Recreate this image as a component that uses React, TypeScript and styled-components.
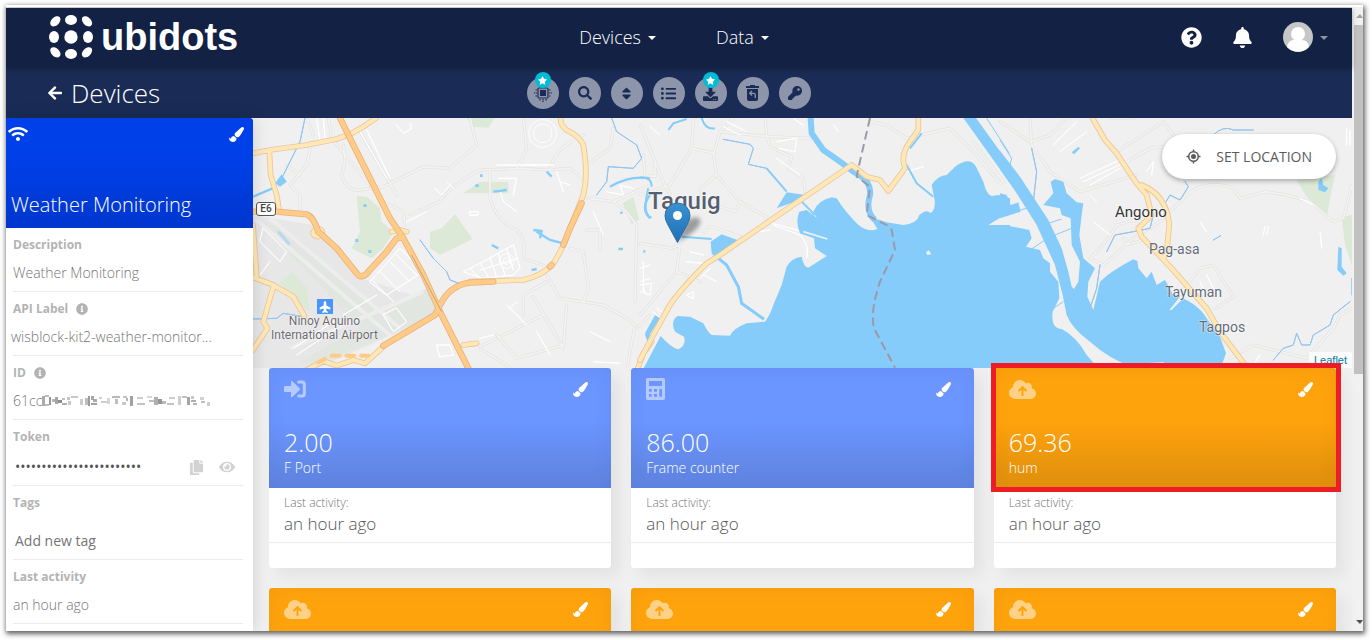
import React from "react";
import styled, { createGlobalStyle, css } from "styled-components";
import {
  FaWifi,
  FaPaintBrush,
  FaSearch,
  FaSort,
  FaListUl,
  FaDownload,
  FaKey,
  FaQuestionCircle,
  FaBell,
  FaInfoCircle,
  FaCopy,
  FaEye,
  FaArrowLeft,
  FaStar,
  FaPlane,
} from "react-icons/fa";
import { FaCloudArrowUp } from "react-icons/fa6";

const GlobalStyle = createGlobalStyle`
  *, *::before, *::after { box-sizing: border-box; }
  body {
    margin: 0;
    background: #fff;
    font-family: "Open Sans", sans-serif;
    font-size: 14px;
  }
  button { font: inherit; border: 0; padding: 0; cursor: pointer; }
  svg { display: block; }
`;

const Page = styled.div`
  height: 100vh;
  min-height: 400px;
  display: flex;
  padding: 5px 9px 9px 6px;
`;

const Frame = styled.div`
  flex: 1;
  min-width: 0;
  display: flex;
  border-top: 2px solid #fff;
  overflow: hidden;
  box-shadow: 1px 2px 5px 1px rgba(0, 0, 0, 0.62);
`;

const Screen = styled.div`
  flex: 1;
  min-width: 0;
  display: flex;
  flex-direction: column;
  border-top: 1px solid #dcdcdc;
`;

const ScrollTrack = styled.div`
  width: 11px;
  padding-left: 2px;
  background: #f1f1f1;
  display: flex;
  flex-direction: column;
  align-items: flex-end;
`;

const ScrollArrow = styled.div<{ $down?: boolean }>`
  width: 9px;
  height: 18px;
  display: flex;
  align-items: center;
  justify-content: flex-end;
  margin-top: ${(p) => (p.$down ? "auto" : "0")};
  color: ${(p) => (p.$down ? "#505050" : "#a3a3a3")};
`;

const ScrollThumb = styled.div`
  width: 9px;
  height: 56%;
  background: #c1c1c1;
`;

const TopBar = styled.header`
  flex: none;
  height: 60px;
  display: grid;
  grid-template-columns: 1fr auto 1fr;
  align-items: center;
  padding: 0 24px 2px 42px;
  background: #132244;
  box-shadow: 0 1px 5px rgba(0, 0, 0, 0.3);
  z-index: 2;
`;

const Logo = styled.a`
  display: flex;
  align-items: center;
  gap: 7px;
  color: #fff;
  font: bold 38px/44px "Liberation Sans", Arial, sans-serif;
  text-decoration: none;
`;

const MainNav = styled.nav`
  display: flex;
  gap: 60px;
  padding-right: 28px;
`;

const NavButton = styled.button`
  display: flex;
  align-items: center;
  gap: 7px;
  background: none;
  color: #fff;
  font-size: 18px;
  font-weight: 300;
  line-height: 24px;
`;

const Caret = styled.span<{ $dim?: boolean }>`
  border: 4px solid transparent;
  border-top-color: ${(p) => (p.$dim ? "#8b93a5" : "#fff")};
  border-bottom: 0;
  margin-top: 2px;
`;

const UserTools = styled.div`
  display: flex;
  justify-content: flex-end;
  align-items: center;
  gap: 30px;
`;

const IconButton = styled.button<{ $color?: string }>`
  display: flex;
  align-items: center;
  background: none;
  color: ${(p) => p.$color || "#fff"};
`;

const AvatarButton = styled(IconButton)`
  gap: 7px;
`;

const SubBar = styled.div`
  flex: none;
  height: 50px;
  display: grid;
  grid-template-columns: 1fr auto 1fr;
  align-items: center;
  padding: 0 62px 0 41px;
  background: #1a2c55;
`;

const BackLink = styled.a`
  display: flex;
  align-items: center;
  gap: 8px;
  color: #fff;
  font-size: 26px;
  font-weight: 300;
  line-height: 32px;
  text-decoration: none;
`;

const ToolRow = styled.div`
  display: flex;
  gap: 10px;
`;

const ToolButton = styled.button`
  position: relative;
  width: 32px;
  height: 32px;
  display: flex;
  align-items: center;
  justify-content: center;
  border-radius: 50%;
  background: #8c95a9;
  color: #1a2c55;
`;

const StarBadge = styled.span`
  position: absolute;
  top: -5px;
  left: 8px;
  width: 16px;
  height: 16px;
  display: flex;
  align-items: center;
  justify-content: center;
  border-radius: 50%;
  background: #00bcd6;
  color: #fff;
`;

const Columns = styled.div`
  flex: 1;
  min-height: 0;
  display: flex;
`;

const Sidebar = styled.aside`
  flex: none;
  width: 247px;
  background: #fff;
  overflow: hidden;
  box-shadow: 0 0 16px rgba(0, 0, 0, 0.14);
  z-index: 1;
`;

const DeviceHead = styled.div`
  height: 110px;
  display: flex;
  flex-direction: column;
  justify-content: space-between;
  padding: 6px 9px 9px 2px;
  background: linear-gradient(#0040e9 35%, #0036ce);
  border-top-right-radius: 3px;
  color: #fff;
`;

const DeviceHeadIcons = styled.div`
  display: flex;
  justify-content: space-between;
`;

const DeviceName = styled.h1`
  margin: 0 0 0 3px;
  font-size: 20px;
  font-weight: 300;
  line-height: 28px;
  color: #fff;
`;

const Field = styled.div<{ $height?: number }>`
  height: ${(p) => p.$height || 64}px;
  margin: 0 10px 0 7px;
  padding: 8px 0 7px;
  border-bottom: 1px solid #ececec;
  display: flex;
  flex-direction: column;
  justify-content: space-between;
`;

const FieldLabel = styled.label`
  display: flex;
  align-items: center;
  gap: 8px;
  color: #b3b3b3;
  font-size: 12px;
  font-weight: 700;
  line-height: 18px;
`;

const FieldValue = styled.div`
  display: flex;
  align-items: center;
  color: #757575;
  font-weight: 300;
  line-height: 22px;
`;

const FieldInput = styled.input<{ $strong?: boolean }>`
  flex: 1;
  min-width: 0;
  width: 100%;
  height: 22px;
  padding: 0 0 0 2px;
  border: 0;
  outline: 0;
  background: none;
  color: ${(p) => (p.$strong ? "#555" : "#757575")};
  font: ${(p) => (p.$strong ? 400 : 300)} 14px/22px "Open Sans", sans-serif;
  &::placeholder { color: #757575; opacity: 1; }
`;

const LabelInput = styled(FieldInput)`
  flex: none;
  padding: 0;
  margin-left: -2px;
`;

const TagInput = styled(FieldInput)`
  flex: none;
  font-weight: 400;
`;

const TokenActions = styled.div`
  display: flex;
  gap: 15px;
  padding-right: 8px;
`;

const Main = styled.main`
  flex: 1;
  min-width: 0;
  background: #f0f0f0;
`;

const MapPanel = styled.section`
  position: relative;
  height: 250px;
  overflow: hidden;
  background: #f0f0f0;
`;

const MapCanvas = styled.svg`
  width: 100%;
  height: 100%;
`;

const MapLabel = styled.span<{ $x: number; $y: number; $size?: number; $color?: string; $weight?: number }>`
  position: absolute;
  left: ${(p) => p.$x}px;
  top: ${(p) => p.$y}px;
  color: ${(p) => p.$color || "#626b7a"};
  font-family: Roboto, sans-serif;
  font-size: ${(p) => p.$size || 14}px;
  font-weight: ${(p) => p.$weight || 400};
  line-height: 1;
  text-align: center;
  white-space: nowrap;
  text-shadow: 0 0 2px #fff, 0 0 1px #fff;
`;

const AirportLabel = styled(MapLabel)`
  line-height: 14px;
`;

const RoadShield = styled.span`
  position: absolute;
  left: 3px;
  top: 84px;
  width: 20px;
  height: 14px;
  border: 1px solid #555;
  border-radius: 3px;
  background: #fff;
  color: #444;
  font: 500 10px/12px Roboto, sans-serif;
  text-align: center;
`;

const AirportMark = styled.span`
  position: absolute;
  left: 64px;
  top: 181px;
  width: 16px;
  height: 15px;
  display: flex;
  align-items: center;
  justify-content: center;
  background: #4a96f8;
  color: #fff;
  svg { transform: rotate(-90deg); }
`;

const Pin = styled.svg`
  position: absolute;
  left: 411px;
  top: 84px;
`;

const LocationButton = styled.button`
  position: absolute;
  top: 16px;
  right: 16px;
  height: 45px;
  display: flex;
  align-items: center;
  gap: 15px;
  padding: 0 24px;
  border-radius: 23px;
  background: #fff;
  color: #5c5c5c;
  font-size: 14px;
  box-shadow: 0 2px 5px rgba(0, 0, 0, 0.3);
`;

const Attribution = styled.a`
  position: absolute;
  right: 0;
  bottom: 0;
  padding: 0 5px;
  background: rgba(255, 255, 255, 0.7);
  color: #0078a8;
  font: 11px/16px "Liberation Sans", Arial, sans-serif;
  text-decoration: none;
`;

const CardGrid = styled.div`
  display: grid;
  grid-template-columns: repeat(3, 1fr);
  gap: 20px;
  padding: 0 16px;
`;

const CardBox = styled.article<{ $marked?: boolean }>`
  position: relative;
  height: 200px;
  border-radius: 3px;
  background: #fff;
  box-shadow: 8px 8px 16px rgba(0, 0, 0, 0.06);
  ${(p) =>
    p.$marked &&
    css`
      &::after {
        content: "";
        position: absolute;
        inset: -5px -5px 76px -3px;
        border: 5px solid #ee1c25;
      }
    `}
`;

const CardHead = styled.div<{ $tone: "blue" | "orange" }>`
  height: 120px;
  padding: 10px 23px 10px 15px;
  display: flex;
  flex-direction: column;
  justify-content: space-between;
  border-radius: 3px 3px 0 0;
  color: #fff;
  background: ${(p) =>
    p.$tone === "blue"
      ? "linear-gradient(#6b95ff 45%, #6187e6 85%, #6085e4)"
      : "linear-gradient(#ffa30d 45%, #e6930d 85%, #e4920d)"};
  box-shadow: inset 0 0 20px rgba(0, 0, 0, 0.05);
`;

const CardIcons = styled.div`
  display: flex;
  justify-content: space-between;
  align-items: center;
  height: 22px;
`;

const TypeIcon = styled.span`
  opacity: 0.5;
`;

const CardValue = styled.div`
  font-size: 25px;
  font-weight: 300;
  line-height: 30px;
`;

const CardName = styled.div`
  font-size: 14px;
  font-weight: 300;
  line-height: 20px;
  padding-top: 1px;
`;

const CardBody = styled.div`
  height: 55px;
  padding: 5px 15px 0;
  border-bottom: 1px solid #ececec;
  font-weight: 300;
`;

const ActivityLabel = styled.div`
  color: #757575;
  font-size: 12px;
  line-height: 20px;
`;

const ActivityValue = styled.div`
  color: #555;
  font-size: 17px;
  line-height: 22px;
`;

function LogoMark() {
  return (
    <svg width="46" height="44" viewBox="0 0 138 132" fill="#fff">
      <ellipse cx="69" cy="15" rx="18" ry="15" />
      <ellipse cx="69" cy="66" rx="20" ry="20" />
      <ellipse cx="69" cy="117" rx="18" ry="15" />
      <ellipse cx="18" cy="66" rx="15" ry="18" />
      <ellipse cx="120" cy="66" rx="15" ry="18" />
      <ellipse cx="22" cy="19" rx="18" ry="12" transform="rotate(-45 22 19)" />
      <ellipse cx="117" cy="19" rx="18" ry="12" transform="rotate(45 117 19)" />
      <ellipse cx="22" cy="112" rx="18" ry="12" transform="rotate(45 22 112)" />
      <ellipse cx="117" cy="112" rx="18" ry="12" transform="rotate(-45 117 112)" />
    </svg>
  );
}

function Avatar() {
  return (
    <svg width="30" height="30" viewBox="0 0 30 30">
      <circle cx="15" cy="15" r="15" fill="#c6c6c6" />
      <circle cx="15" cy="12" r="7" fill="#fff" />
      <path d="M4 25Q5 18 11 18h8q6 0 7 7A15 15 0 0 1 4 25z" fill="#fff" />
    </svg>
  );
}

function ChipIcon() {
  return (
    <svg width="18" height="18" viewBox="0 0 18 18" fill="none" stroke="currentColor">
      <rect x="4" y="4" width="10" height="10" rx="1" strokeWidth="1.2" />
      <rect x="6" y="6" width="6" height="6" fill="currentColor" stroke="none" />
      <path strokeWidth="1.2" strokeDasharray="1.500 .5" d="M6 3V1M9 3V0M12 3V1M6 15v2M9 15v3M12 15v2M3 6H1M3 9H0M3 12H1M15 6h2M15 9h3M15 12h2" />
    </svg>
  );
}

function TrashIcon() {
  return (
    <svg width="13" height="16" viewBox="0 0 13 16">
      <path fill="currentColor" d="M4 0h5v1h4v2H0V1h4zM1 4h11v10q0 2-2 2H3q-2 0-2-2z" />
      <path fill="none" stroke="#8c95a9" strokeWidth="1.3" d="M6 6 3.700 8.300 6 10.600M4 8.300h3.500q1.800 0 1.800 1.800V13" />
    </svg>
  );
}

function TargetIcon() {
  return (
    <svg width="15" height="15" viewBox="0 0 30 30" fill="none" stroke="currentColor">
      <circle cx="15" cy="15" r="9.500" strokeWidth="3" />
      <circle cx="15" cy="15" r="5" fill="currentColor" stroke="none" />
      <path strokeWidth="3" d="M15 1v5M15 24v5M1 15h5M24 15h5" />
    </svg>
  );
}

function EnterIcon() {
  return (
    <svg width="22" height="18" viewBox="0 0 66 54">
      <path fill="currentColor" d="M3 18h18V6q0-5 4-2l22 21q3 2 0 5L25 51q-4 3-4-2V36H3q-3 0-3-3V21q0-3 3-3z" />
      <path fill="none" stroke="currentColor" strokeWidth="9" strokeLinecap="round" d="M44 6h10q7 0 7 7v28q0 7-7 7H44" />
    </svg>
  );
}

function CalculatorIcon() {
  return (
    <svg width="19" height="22" viewBox="0 0 57 66">
      <path
        fill="currentColor"
        fillRule="evenodd"
        d="M5 0h47q5 0 5 5v56q0 5-5 5H5q-5 0-5-5V5q0-5 5-5zM9 9v15h39V9zM9 33v8h8v-8zM24 33v8h9v-8zM9 48v8h8v-8zM24 48v8h9v-8zM40 33v23h8V33z"
      />
    </svg>
  );
}

/* Hidden characters of the identifier: [x, y, width, height, grey level] */
const mosaic = [
  [0, 1, 3, 10, 170], [3, 0, 4, 2, 190], [3, 9, 4, 2, 190], [7, 2, 2, 8, 150], [10, 4, 3, 3, 180],
  [13, 2, 3, 7, 165], [16, 5, 4, 3, 140], [20, 3, 3, 2, 190], [20, 8, 5, 2, 175], [25, 2, 3, 3, 195],
  [26, 6, 3, 4, 200], [29, 1, 7, 2, 200], [38, 4, 3, 6, 205], [43, 3, 3, 7, 190], [46, 1, 2, 10, 155],
  [49, 1, 3, 4, 165], [51, 4, 4, 3, 170], [49, 8, 6, 2, 160], [57, 2, 3, 2, 210], [59, 6, 6, 2, 205],
  [65, 3, 3, 6, 215], [70, 1, 8, 2, 185], [73, 4, 3, 5, 190], [81, 1, 4, 2, 195], [84, 3, 2, 3, 180],
  [80, 7, 4, 3, 200], [88, 1, 3, 10, 160], [95, 2, 6, 2, 205], [95, 8, 8, 2, 195], [105, 1, 5, 2, 215],
  [107, 5, 5, 2, 190], [112, 2, 4, 8, 175], [116, 4, 4, 5, 150], [120, 6, 4, 3, 185], [127, 2, 6, 2, 205],
  [125, 8, 7, 2, 195], [136, 1, 3, 9, 205], [140, 1, 5, 2, 195], [145, 2, 3, 8, 165], [149, 1, 3, 3, 200],
  [149, 5, 5, 2, 175], [151, 8, 4, 2, 180], [158, 2, 4, 3, 210], [159, 6, 4, 2, 190], [165, 7, 3, 4, 205],
];

function Mosaic() {
  return (
    <svg width="168" height="12" viewBox="0 0 168 12">
      {mosaic.map(([x, y, w, h, g], i) => (
        <rect key={i} x={x} y={y} width={w} height={h} fill={`rgb(${g},${g},${g})`} />
      ))}
    </svg>
  );
}

const WATER = "#85ccfa";

function Roads({ d, kind }: { d: string; kind: "trunk" | "primary" | "minor" | "lane" | "stream" }) {
  const style = {
    trunk: ["#e9b27d", 19, "#ffcb86", 14],
    primary: ["#eac49c", 17, "#ffe8b6", 12],
    minor: ["#e3e2df", 9, "#f3f3f2", 5],
    lane: ["#ffffff", 3, "#ffffff", 3],
    stream: ["#93c5f2", 3, "#93c5f2", 3],
  }[kind] as [string, number, string, number];
  return (
    <g fill="none" strokeLinejoin="round" strokeLinecap="round">
      <path d={d} stroke={style[0]} strokeWidth={style[1]} />
      <path d={d} stroke={style[2]} strokeWidth={style[3]} />
    </g>
  );
}

function WestTile() {
  return (
    <g transform="translate(-9 -9)">
      <path fill="#e7e7e7" d="M9 300 190 330 330 490 430 520 540 560 560 600 190 765H9z" />
      <path fill="#e1e6e0" d="M20 310 110 345 400 600 545 510 565 595 200 750 150 740 330 640z" />
      <path fill="none" stroke="#ededed" strokeWidth="12" d="M20 315 430 670M60 310 450 640M120 700 520 530" />
      <g fill="#dde9d7">
        <path d="M320 242 350 245 390 280 395 320 430 350 400 400 365 430 305 400 330 350z" />
        <path d="M615 298 668 372 570 420 540 400 540 350 575 340z" />
        <path d="M640 235 690 200 775 200 775 235zM650 9H735L715 38 670 35zM1118 265 1150 245 1168 315 1145 328z" />
        <path d="M88 500 130 470 170 520 180 590 150 570z" />
      </g>
      <Roads kind="minor" d="M235 9 245 70 400 260 460 290 465 330M330 50 440 240M170 9 190 60M110 150 150 180M185 80 170 150 120 210 150 240 150 290M280 90Q290 140 275 180 290 230 330 225L400 215 520 155 600 160 680 90 660 9M480 300 570 260Q590 220 690 165L810 160 890 165 960 160 1010 200M720 165 720 250Q740 320 800 345 830 370 820 430L890 455M820 9 830 100 800 160M900 165Q910 100 1000 60M1010 150 1080 100 1090 40M1015 250 1090 260 1130 290 1160 330 1155 560M890 480 930 550 1060 570 1130 610 1155 630 1130 765M820 600 820 540 890 500M850 545 940 700M700 690 880 600M690 700 790 765M740 660 800 730 940 690 950 570M1000 560 1015 520 1000 410 960 400M1090 260 1200 210M1010 345 1050 345 1050 400M1160 640 1200 600" />
      <Roads kind="lane" d="M200 9 210 75M220 9 225 70M330 50 410 190M350 45 420 190M310 90 370 200M440 30 460 55 485 40 480 25M555 220 575 240 600 210M590 200 610 220M470 320 530 290M660 290H685V300H660zM740 150 860 150M745 190 800 190 790 240M750 225 760 260 800 290M830 150 910 150M920 170 940 230M930 200 960 210M1070 230 1120 240 1110 210 1150 220M1030 290 1060 360M640 470 700 440 790 390 810 460 790 480 700 490zM660 460 690 490M690 445 715 485M720 430 740 485M745 415 765 480M770 400 790 465M690 465 805 430M40 340 110 410 90 440 30 380zM30 480 60 440M360 500 450 400 520 470 410 540zM370 500 430 560M390 470 450 530M420 440 480 500M440 420 500 480M400 600 430 650 470 620 440 580zM560 690 600 690 610 720 570 725zM780 580 800 560M770 570 830 630M1020 650 1080 680M1030 740 1110 745M690 670 730 660M860 650 900 720M1170 460 1200 450M1170 500 1200 490M1180 440V530M130 700 250 620M140 720 260 640M280 600 380 540" />
      <g fill="none" stroke="#fff" strokeWidth="3">
        <circle cx="878" cy="55" r="42" />
        <circle cx="878" cy="55" r="28" />
        <circle cx="770" cy="438" r="22" />
        <circle cx="770" cy="438" r="10" />
      </g>
      <Roads kind="stream" d="M165 9 150 80 135 110 95 190M510 375 550 430 590 470 600 495 640 510M9 612 80 610 100 595 160 605M1085 9 1100 50 1160 90 1175 130 1150 160 1075 155 1070 200 1040 240" />
      <g fill="none" stroke={WATER} strokeWidth="7">
        <path d="M9 245 80 215M850 345 875 348 870 370M860 350 900 375 940 385M730 230 770 225M1080 215Q1140 180 1200 190M1200 240Q1170 280 1200 310M890 170 905 185M725 390 745 400M845 465 860 462" />
      </g>
      <path fill={WATER} d="M75 205 95 178 110 200 90 215zM676 208h10v8h-10zM340 268h10v8h-10zM316 372h9v9h-9zM355 405h9v9h-9zM690 178h8v8h-8zM1110 290h8v6h-8zM1105 398h14v8h-14zM1180 405h6v8h-6zM1185 660 1200 630V700z" />
      <path fill="#b9d8f0" d="M80 350 90 348 122 385 115 392z" />
      <Roads kind="primary" d="M9 115 60 105 170 90 260 72 300 58 340 35 378 9M58 110 62 180 80 240 88 288M9 330 20 485M9 487 70 510 130 545 163 603M70 515 40 620 52 640 9 705M170 765 220 738 260 752 310 735 345 745 400 695M660 500 820 495Q880 482 910 445 940 400 960 340L1000 240Q1015 180 1000 90 990 65 950 45 930 30 932 9M1162 765 1180 715 1205 680M195 345Q180 360 205 365 230 350 205 340M425 350 450 345 470 350M640 690 680 685" />
      <Roads kind="trunk" d="M268 5 300 70 350 170 420 310 460 370 520 480 575 600 620 690 660 770M80 290 170 298Q190 305 205 350L260 400 320 475Q335 495 355 470L410 410 440 370 455 368M9 290H30M400 692 555 600 570 570Q600 510 660 503L730 500M900 455 905 450M940 390 960 340 995 265" />
      <path stroke="#ffcb86" strokeWidth="12" strokeLinecap="round" strokeDasharray="24 20" d="M205 742 225 732M245 722H355" />
      <path d="M485 420 575 590" stroke="#b9a78f" strokeWidth="3" />
    </g>
  );
}

function CentreTile() {
  return (
    <g transform="translate(1161 -9)">
      <Roads kind="minor" d="M0 30 70 200 90 240M160 9 155 100 90 210 0 240M155 100 225 115M280 9 240 50 220 120 230 180 300 260 385 310M230 180 180 220 190 260 285 290 300 260M240 50 390 65 510 70M375 9 380 60 390 95 455 125 445 160 490 190 495 230M550 100 640 165M690 20 740 30 800 70 930 40 1000 110 1080 205 1090 200 1000 80M0 600 110 470 120 390 95 400 0 385M110 470 180 500M190 350 210 335 260 350 300 365M10 120 15 180 45 185 45 140" />
      <Roads kind="lane" d="M30 35 60 60M180 30 200 10M260 20 320 50M250 35 300 60M410 80 470 70 465 110 415 100M380 320 560 370M400 330 480 360Q510 390 500 430M460 10 490 30M580 30 595 50M410 130 480 180M800 170 850 155M360 350 390 345M150 410 190 420M140 440 190 445M190 480 230 500M180 490 210 460M0 510 35 505 30 540 0 530M10 520 20 540M140 540 160 530 160 550zM50 580 80 600M40 590 70 620M30 620 60 650" />
      <g fill={WATER}>
        <path d="M8 765 62 663Q95 700 115 703 140 690 132 665L105 650Q90 620 112 603L150 605 190 625Q205 655 215 660L270 662Q280 640 320 625L375 620Q390 600 400 570L425 510 440 455Q455 428 485 425 490 455 505 458L560 423 525 400 522 370 480 355Q465 320 478 290L500 285 530 308 520 290Q535 255 575 247L590 250Q615 290 650 325 680 355 712 342L690 305 740 322 790 330Q832 325 838 300 860 280 872 295 890 280 882 245L875 210Q895 180 920 180L945 155Q990 122 1008 155L1030 200Q1040 240 1055 243L1075 240 1110 250V765z" />
        <path d="M970 9H1008L1110 150V205zM410 280 440 232 495 240 460 262zM215 415 212 380 245 358 300 378 225 428zM15 655 45 600 60 610 25 665z" />
      </g>
      <g fill="none" stroke={WATER}>
        <path strokeWidth="18" d="M512 9 515 55 550 105 600 140 640 170Q695 195 690 240 675 290 705 315" />
        <path strokeWidth="9" d="M235 430 260 450 295 515 305 565 372 613" />
        <path strokeWidth="6" d="M125 365 215 372M0 188Q35 185 35 215M25 220Q5 300 35 308M380 160 440 230M485 260 525 300M800 150 830 205 880 245M845 55 810 100M185 9Q195 45 225 40M140 12 100 25 85 45" />
        <path strokeWidth="3" d="M1040 10 1108 115" />
      </g>
      <Roads kind="stream" d="M250 73 330 88 340 100 325 148 380 160" />
      <path fill="#f0f0f0" d="M1045 330 1110 290V330zM858 412 866 406 874 418 862 420z" />
      <path stroke="#f0f0f0" strokeWidth="5" d="M490 350 562 372" />
      <Roads kind="primary" d="M0 735 40 660 90 570Q120 525 200 445L240 420 635 150 680 185 720 195 745 228 795 160Q780 120 810 80L835 45V5" />
      <path
        fill="none"
        stroke="#9d99a6"
        strokeWidth="6"
        strokeDasharray="26 14"
        d="M690 9 655 160 650 185 690 215 680 300 745 333 755 345 765 405 720 500Q690 590 702 640L765 758"
      />
    </g>
  );
}

function EastTile() {
  return (
    <g transform="translate(2241 -9)">
      <path fill="#dde9d7" d="M890 195 1005 180 990 250 980 310 920 245zM1025 305 1056 300V450L1035 390z" />
      <Roads kind="minor" d="M90 9 95 90 150 170 240 230 410 180M0 20 90 80 150 60 200 9M380 140 450 100 490 95M350 110 490 20 520 60M330 9 400 9M270 430Q330 370 350 330L420 310M270 430 310 450 400 370 480 320 560 240Q620 190 700 220L720 250 800 230 860 240 930 260 1000 320 1030 310 1056 210M370 370 380 390 430 375M530 550 600 460 640 450 700 545 650 580M690 730 760 690 920 730 1000 640 1020 600 1056 580" />
      <Roads kind="lane" d="M160 90 230 20M180 110 260 50M240 190 370 130M250 200 380 140M270 210 360 160M440 170 460 140 455 180M270 240 290 260M280 320 330 360M480 240 510 270M1040 40V90M1050 45V90M600 320 620 350M790 360 795 335M800 360 805 335M620 480 640 520M600 500 620 540M710 650 740 640M900 250 940 270M960 350 965 400M780 720 750 765" />
      <g fill={WATER}>
        <path d="M0 235 20 240 32 270 55 262 62 290 0 310V330L40 335 88 345 95 370 78 395 120 405 130 430 150 445 150 470 175 500 178 550 158 590Q152 640 185 642 230 665 260 720L300 765H0z" />
        <path d="M0 107 60 185 145 315 185 400 205 470 215 515 222 522 235 500 240 440 215 390 212 310 185 300 180 280 130 270 160 235 152 200 165 192 190 200 200 235 230 262 250 265 245 300 238 360 250 430 285 460 265 500 262 545 280 585 300 500Q330 470 400 433L412 438 415 460 440 490 455 470 470 510 495 495 520 540Q590 560 620 610L660 665 678 715 660 765H420Q330 735 270 680 215 640 200 600L188 540 165 450 110 330 50 235 0 163z" />
        <path d="M215 112 235 95 240 100 222 118zM955 200 965 190 970 210 985 220 975 232 955 225zM1015 395 1025 400 1025 455 1040 475 1030 482 1012 465z" />
      </g>
      <path fill="#f0f0f0" d="M508 585 540 545 550 550 515 585zM410 765 430 745 490 742 520 765z" />
      <g fill="none" stroke={WATER} strokeWidth="3">
        <path d="M0 75 35 130 30 150M0 300 80 280M75 415 135 375M145 325 185 312M165 360 215 340M160 580 190 560" />
      </g>
      <Roads kind="stream" d="M95 100 110 170 100 260M640 60Q670 30 700 45L760 45M555 200 565 215 540 255 510 240 495 265M460 300 450 340 400 350 345 360 320 410M640 375 662 362M300 450 290 520 270 580M820 735 850 700 880 690 890 655 905 690 930 690 940 660 990 630 1000 600 1050 560M1056 490V540" />
      <Roads kind="primary" d="M275 5 315 75 350 115 410 205 440 240 455 300 415 340 425 365 515 460 620 580 660 650 735 750M425 210Q500 240 508 330L500 410 490 430" />
    </g>
  );
}

function LocationMap() {
  return (
    <MapPanel>
      <MapCanvas viewBox="0 0 3297 750" preserveAspectRatio="xMinYMin slice">
        <WestTile />
        <CentreTile />
        <EastTile />
      </MapCanvas>
      <RoadShield>E6</RoadShield>
      <AirportMark>
        <FaPlane size={12} />
      </AirportMark>
      <AirportLabel $x={18} $y={196} $size={12} $color="#6b6b70">
        Ninoy Aquino
        <br />
        International Airport
      </AirportLabel>
      <MapLabel $x={395} $y={71} $size={24} $weight={500} $color="#555f70">Taguig</MapLabel>
      <MapLabel $x={862} $y={87} $size={15} $color="#333">Angono</MapLabel>
      <MapLabel $x={896} $y={124}>Pag-asa</MapLabel>
      <MapLabel $x={912} $y={167}>Tayuman</MapLabel>
      <MapLabel $x={946} $y={202}>Tagpos</MapLabel>
      <Pin width="44" height="42" viewBox="0 0 44 42">
        <defs>
          <linearGradient id="pin-fill" x1="0" y1="0" x2="0" y2="1">
            <stop offset="0" stopColor="#3a92d2" />
            <stop offset="1" stopColor="#1f6fb5" />
          </linearGradient>
          <filter id="pin-shade" x="-50%" y="-50%" width="200%" height="200%">
            <feGaussianBlur stdDeviation="2" />
          </filter>
        </defs>
        <path d="M14 40 20 22Q30 12 36 17 40 25 14 40z" fill="#000" opacity=".35" filter="url(#pin-shade)" />
        <path d="M13.500 40.500 4 23Q1 18 1 13.500a12.500 12.500 0 0 1 25 0Q26 18 23 23z" fill="url(#pin-fill)" stroke="#2b70a8" />
        <circle cx="13.500" cy="13.500" r="4.500" fill="#fff" />
      </Pin>
      <LocationButton type="button">
        <TargetIcon />
        SET LOCATION
      </LocationButton>
      <Attribution href="#leaflet">Leaflet</Attribution>
    </MapPanel>
  );
}

interface CardProps {
  tone: "blue" | "orange";
  icon: React.ReactNode;
  reading?: { value: string; name: string; activity: string };
  marked?: boolean;
}

function VariableCard({ tone, icon, reading, marked }: CardProps) {
  return (
    <CardBox $marked={marked}>
      <CardHead $tone={tone}>
        <CardIcons>
          <TypeIcon>{icon}</TypeIcon>
          <IconButton type="button" aria-label="Change colour">
            <FaPaintBrush size={15} />
          </IconButton>
        </CardIcons>
        {reading && (
          <div>
            <CardValue>{reading.value}</CardValue>
            <CardName>{reading.name}</CardName>
          </div>
        )}
      </CardHead>
      {reading && (
        <CardBody>
          <ActivityLabel>Last activity:</ActivityLabel>
          <ActivityValue>{reading.activity}</ActivityValue>
        </CardBody>
      )}
    </CardBox>
  );
}

const cards: CardProps[] = [
  { tone: "blue", icon: <EnterIcon />, reading: { value: "2.00", name: "F Port", activity: "an hour ago" } },
  { tone: "blue", icon: <CalculatorIcon />, reading: { value: "86.00", name: "Frame counter", activity: "an hour ago" } },
  {
    tone: "orange",
    icon: <FaCloudArrowUp size={27} />,
    reading: { value: "69.36", name: "hum", activity: "an hour ago" },
    marked: true,
  },
  { tone: "orange", icon: <FaCloudArrowUp size={27} /> },
  { tone: "orange", icon: <FaCloudArrowUp size={27} /> },
  { tone: "orange", icon: <FaCloudArrowUp size={27} /> },
];

const tools = [
  { label: "Device type", icon: <ChipIcon />, star: true },
  { label: "Search", icon: <FaSearch size={14} /> },
  { label: "Sort", icon: <FaSort size={15} /> },
  { label: "List", icon: <FaListUl size={15} /> },
  { label: "Download", icon: <FaDownload size={15} />, star: true },
  { label: "Restore", icon: <TrashIcon /> },
  { label: "Keys", icon: <FaKey size={14} /> },
];

export default function App() {
  return (
    <Page>
      <GlobalStyle />
      <Frame>
        <Screen>
          <TopBar>
            <Logo href="#home">
              <LogoMark />
              ubidots
            </Logo>
            <MainNav>
              <NavButton type="button">Devices<Caret /></NavButton>
              <NavButton type="button">Data<Caret /></NavButton>
            </MainNav>
            <UserTools>
              <IconButton type="button" aria-label="Help"><FaQuestionCircle size={21} /></IconButton>
              <IconButton type="button" aria-label="Notifications"><FaBell size={21} /></IconButton>
              <AvatarButton type="button" aria-label="Account">
                <Avatar />
                <Caret $dim />
              </AvatarButton>
            </UserTools>
          </TopBar>
          <SubBar>
            <BackLink href="#devices">
              <FaArrowLeft size={16} />
              Devices
            </BackLink>
            <ToolRow>
              {tools.map((t) => (
                <ToolButton key={t.label} type="button" aria-label={t.label}>
                  {t.icon}
                  {t.star && <StarBadge><FaStar size={9} /></StarBadge>}
                </ToolButton>
              ))}
            </ToolRow>
          </SubBar>
          <Columns>
            <Sidebar>
              <DeviceHead>
                <DeviceHeadIcons>
                  <FaWifi size={20} />
                  <IconButton type="button" aria-label="Change colour"><FaPaintBrush size={15} /></IconButton>
                </DeviceHeadIcons>
                <DeviceName>Weather Monitoring</DeviceName>
              </DeviceHead>
              <Field>
                <FieldLabel as="div">Description</FieldLabel>
                <FieldValue>Weather Monitoring</FieldValue>
              </Field>
              <Field>
                <FieldLabel htmlFor="api-label">API Label <FaInfoCircle size={12} /></FieldLabel>
                <LabelInput id="api-label" readOnly value="wisblock-kit2-weather-monitor..." />
              </Field>
              <Field>
                <FieldLabel as="div">ID <FaInfoCircle size={12} /></FieldLabel>
                <FieldValue>61cc<Mosaic /></FieldValue>
              </Field>
              <Field $height={66}>
                <FieldLabel htmlFor="token">Token</FieldLabel>
                <FieldValue>
                  <FieldInput id="token" type="password" readOnly $strong value="abcdefghijklmnopqrstuvwx" />
                  <TokenActions>
                    <IconButton type="button" aria-label="Copy" $color="#d2d2d2"><FaCopy size={15} /></IconButton>
                    <IconButton type="button" aria-label="Show" $color="#d2d2d2"><FaEye size={16} /></IconButton>
                  </TokenActions>
                </FieldValue>
              </Field>
              <Field $height={74}>
                <FieldLabel htmlFor="tags">Tags</FieldLabel>
                <TagInput id="tags" placeholder="Add new tag" />
              </Field>
              <Field>
                <FieldLabel as="div">Last activity</FieldLabel>
                <FieldValue>an hour ago</FieldValue>
              </Field>
            </Sidebar>
            <Main>
              <LocationMap />
              <CardGrid>
                {cards.map((c, i) => (
                  <VariableCard key={i} {...c} />
                ))}
              </CardGrid>
            </Main>
          </Columns>
        </Screen>
        <ScrollTrack aria-hidden>
          <ScrollArrow>
            <svg width="7" height="4" viewBox="0 0 7 4"><path d="M4 0 0 4h7z" fill="currentColor" /></svg>
          </ScrollArrow>
          <ScrollThumb />
          <ScrollArrow $down>
            <svg width="7" height="4" viewBox="0 0 7 4"><path d="M0 0h7L4 4z" fill="currentColor" /></svg>
          </ScrollArrow>
        </ScrollTrack>
      </Frame>
    </Page>
  );
}
